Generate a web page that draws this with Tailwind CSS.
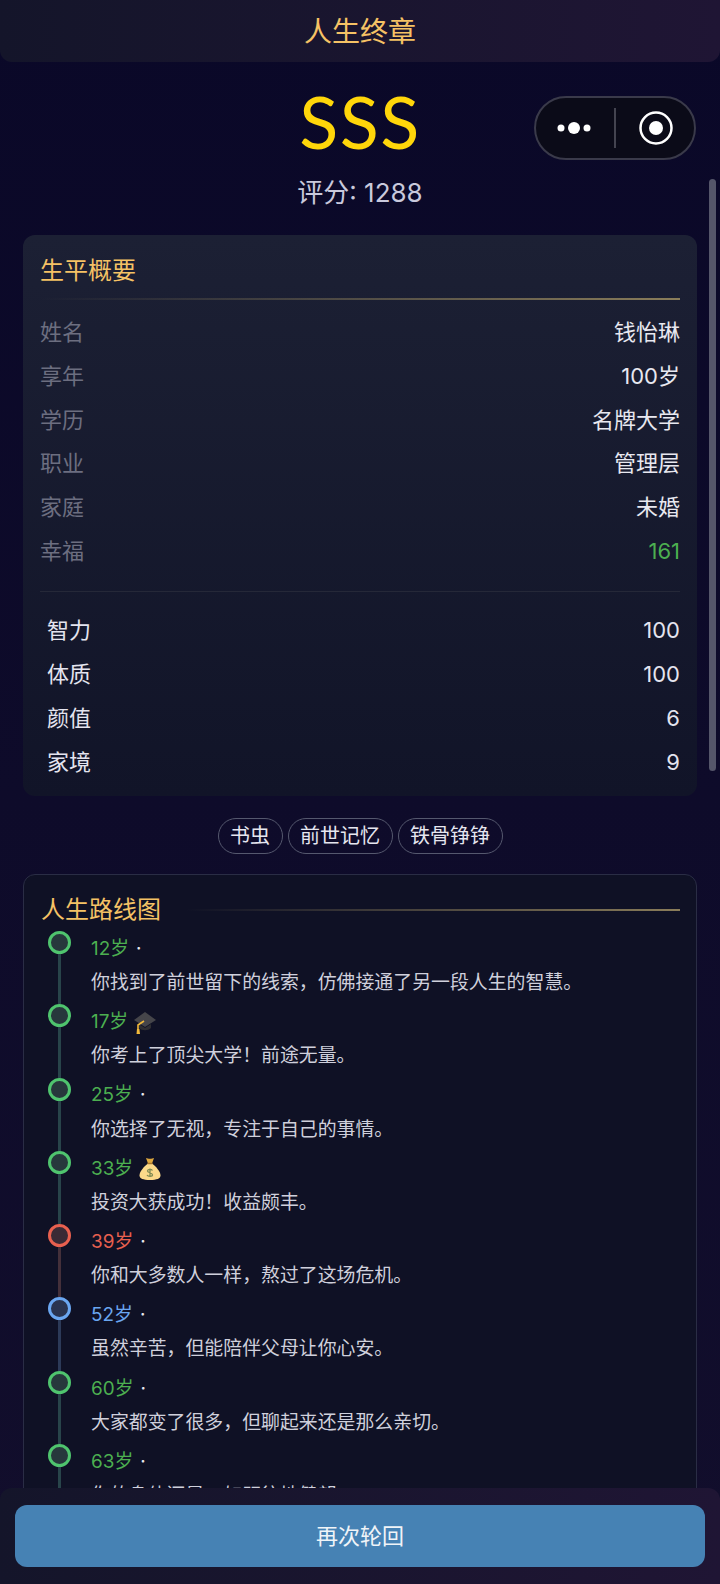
<!DOCTYPE html>
<html lang="zh">
<head>
<meta charset="utf-8">
<script src="https://cdn.jsdelivr.net/npm/@tailwindcss/browser@4"></script>
</head>
<body class="m-0">
<div class="relative w-[720px] h-[1584px] overflow-hidden bg-gradient-to-b from-[#0a0828] to-[#120e2c] font-['Inter','Noto_Sans_CJK_SC',sans-serif]">
  <header class="h-[62px] pt-[2px] rounded-b-[12px] bg-gradient-to-r from-[#14152a] to-[#1f1534] flex items-center justify-center text-[28px] leading-[60px] text-[#f5c265] font-normal">人生终章</header>

  <div class="flex flex-col items-center">
    <div class="mt-[23px] h-[72px] leading-[72px] text-[72px] tracking-[1.5px] text-[#ffd60a] font-['Lato',sans-serif]">SSS</div>
    <div class="mt-[18px] h-[36px] leading-[36px] text-[26px] text-[#c9c9dc]">评分: 1288</div>
  </div>

  <section class="mx-[23px] mt-[24px] h-[561px] rounded-[12px] bg-gradient-to-b from-[#1c2034] to-[#111428] px-[17px] pt-[18px]">
    <h2 class="text-[24px] leading-[34px] pt-[1px] h-[34px] text-[#f5c265] font-normal">生平概要</h2>
    <div class="mt-[11px] h-[2px] bg-gradient-to-r from-transparent to-[#8a7d5a]"></div>
    <div class="mt-[11px] flex flex-col text-[22px]">
      <div class="flex justify-between h-[43.7px] items-center"><span class="text-[#6c6e80]">姓名</span><span class="text-[#e8e8f0]">钱怡琳</span></div>
      <div class="flex justify-between h-[43.7px] items-center"><span class="text-[#6c6e80]">享年</span><span class="text-[#e8e8f0]">100岁</span></div>
      <div class="flex justify-between h-[43.7px] items-center"><span class="text-[#6c6e80]">学历</span><span class="text-[#e8e8f0]">名牌大学</span></div>
      <div class="flex justify-between h-[43.7px] items-center"><span class="text-[#6c6e80]">职业</span><span class="text-[#e8e8f0]">管理层</span></div>
      <div class="flex justify-between h-[43.7px] items-center"><span class="text-[#6c6e80]">家庭</span><span class="text-[#e8e8f0]">未婚</span></div>
      <div class="flex justify-between h-[43.7px] items-center"><span class="text-[#6c6e80]">幸福</span><span class="text-[#4caf50]">161</span></div>
    </div>
    <div class="mt-[18px] h-px bg-[#252838]"></div>
    <div class="mt-[17px] flex flex-col text-[22px] text-[#e4e4ef] pl-[7px]">
      <div class="flex justify-between h-[43.7px] items-center"><span>智力</span><span>100</span></div>
      <div class="flex justify-between h-[43.7px] items-center"><span>体质</span><span>100</span></div>
      <div class="flex justify-between h-[43.7px] items-center"><span>颜值</span><span>6</span></div>
      <div class="flex justify-between h-[43.7px] items-center"><span>家境</span><span>9</span></div>
    </div>
  </section>

  <div class="mt-[22px] flex justify-center gap-[5px]">
    <span class="h-[36px] px-[11.5px] rounded-full border border-[#55586e] text-[20px] leading-[34px] text-[#e6e6f0]">书虫</span>
    <span class="h-[36px] px-[11.5px] rounded-full border border-[#55586e] text-[20px] leading-[34px] text-[#e6e6f0]">前世记忆</span>
    <span class="h-[36px] px-[11.5px] rounded-full border border-[#55586e] text-[20px] leading-[34px] text-[#e6e6f0]">铁骨铮铮</span>
  </div>

  <section class="mx-[23px] mt-[20px] h-[700px] rounded-[12px] border border-[#2a2d45] bg-[#0f1125] pl-[17px] pr-[16px] pt-[18px]">
    <div class="flex items-center gap-[24px]">
      <h2 class="text-[24px] leading-[34px] text-[#f5c265] font-normal">人生路线图</h2>
      <div class="flex-1 h-[2px] bg-gradient-to-r from-transparent to-[#8a7d5a]"></div>
    </div>
    <ol class="mt-[4px] flex flex-col">
      <li class="flex h-[73.3px]">
        <div class="w-[36px] mr-[14px] shrink-0 flex flex-col items-center"><span class="w-[23px] h-[23px] shrink-0 rounded-full border-[3px] border-[#4fc46e] bg-[#27383c]"></span><span class="w-[3px] flex-1 bg-[#28444a]"></span></div>
        <div><div class="h-[32px] pt-[4px] flex items-center text-[18.9px] text-[#4caf50]">12岁<span class="ml-[7px] text-[#e8e8f0]">·</span></div><p class="mt-[5px] text-[18.9px] leading-[30px] text-[#cfd0dc]">你找到了前世留下的线索，仿佛接通了另一段人生的智慧。</p></div>
      </li>
      <li class="flex h-[73.3px]">
        <div class="w-[36px] mr-[14px] shrink-0 flex flex-col items-center"><span class="w-[23px] h-[23px] shrink-0 rounded-full border-[3px] border-[#4fc46e] bg-[#27383c]"></span><span class="w-[3px] flex-1 bg-[#28444a]"></span></div>
        <div><div class="h-[32px] pt-[4px] flex items-center text-[18.9px] text-[#4caf50]">17岁<svg class="ml-[5px]" width="24" height="24" viewBox="0 0 24 24"><path d="M12 2 23 10 12 17 1 10Z" fill="#45454a"/><path d="M6 14v4c3 3 9 3 12 0v-4l-6 4Z" fill="#2e2e33"/><path d="M11 11 5 15v4" fill="none" stroke="#f2b93b" stroke-width="1.6"/><path d="M4 19h2.400l.6 5H3.500Z" fill="#f2b93b"/></svg></div><p class="mt-[5px] text-[18.9px] leading-[30px] text-[#cfd0dc]">你考上了顶尖大学！前途无量。</p></div>
      </li>
      <li class="flex h-[73.3px]">
        <div class="w-[36px] mr-[14px] shrink-0 flex flex-col items-center"><span class="w-[23px] h-[23px] shrink-0 rounded-full border-[3px] border-[#4fc46e] bg-[#27383c]"></span><span class="w-[3px] flex-1 bg-[#28444a]"></span></div>
        <div><div class="h-[32px] pt-[4px] flex items-center text-[18.9px] text-[#4caf50]">25岁<span class="ml-[7px] text-[#e8e8f0]">·</span></div><p class="mt-[5px] text-[18.9px] leading-[30px] text-[#cfd0dc]">你选择了无视，专注于自己的事情。</p></div>
      </li>
      <li class="flex h-[73.3px]">
        <div class="w-[36px] mr-[14px] shrink-0 flex flex-col items-center"><span class="w-[23px] h-[23px] shrink-0 rounded-full border-[3px] border-[#4fc46e] bg-[#27383c]"></span><span class="w-[3px] flex-1 bg-[#28444a]"></span></div>
        <div><div class="h-[32px] pt-[4px] flex items-center text-[18.9px] text-[#4caf50]">33岁<svg class="ml-[5px]" width="24" height="24" viewBox="0 0 24 24"><path d="M8 1c2 1 6 1 8 0l-2 5.500h-4Z" fill="#e0a93f"/><path d="M10 6.500h4c4 3 8.500 8 8.500 12 0 3-3.500 4.500-10.500 4.500S1.500 21.500 1.500 18.500c0-4 4.500-9 8.500-12Z" fill="#fbd98a"/><path d="M9.500 6.500h5" stroke="#a9762a" stroke-width="1.500"/><path d="M14.500 13.500c-1-1.500-5-1.500-5 .5s5 1.500 5 3.700-4.500 2-5.500.3M12 11.500v8" fill="none" stroke="#7f8a52" stroke-width="1.300"/></svg></div><p class="mt-[5px] text-[18.9px] leading-[30px] text-[#cfd0dc]">投资大获成功！收益颇丰。</p></div>
      </li>
      <li class="flex h-[73.3px]">
        <div class="w-[36px] mr-[14px] shrink-0 flex flex-col items-center"><span class="w-[23px] h-[23px] shrink-0 rounded-full border-[3px] border-[#e8604f] bg-[#3a2a35]"></span><span class="w-[3px] flex-1 bg-[#44303a]"></span></div>
        <div><div class="h-[32px] pt-[4px] flex items-center text-[18.9px] text-[#e8604f]">39岁<span class="ml-[7px] text-[#e8e8f0]">·</span></div><p class="mt-[5px] text-[18.9px] leading-[30px] text-[#cfd0dc]">你和大多数人一样，熬过了这场危机。</p></div>
      </li>
      <li class="flex h-[73.3px]">
        <div class="w-[36px] mr-[14px] shrink-0 flex flex-col items-center"><span class="w-[23px] h-[23px] shrink-0 rounded-full border-[3px] border-[#6aa6f0] bg-[#2a3450]"></span><span class="w-[3px] flex-1 bg-[#2c3a58]"></span></div>
        <div><div class="h-[32px] pt-[4px] flex items-center text-[18.9px] text-[#6aa6f0]">52岁<span class="ml-[7px] text-[#e8e8f0]">·</span></div><p class="mt-[5px] text-[18.9px] leading-[30px] text-[#cfd0dc]">虽然辛苦，但能陪伴父母让你心安。</p></div>
      </li>
      <li class="flex h-[73.3px]">
        <div class="w-[36px] mr-[14px] shrink-0 flex flex-col items-center"><span class="w-[23px] h-[23px] shrink-0 rounded-full border-[3px] border-[#4fc46e] bg-[#27383c]"></span><span class="w-[3px] flex-1 bg-[#28444a]"></span></div>
        <div><div class="h-[32px] pt-[4px] flex items-center text-[18.9px] text-[#4caf50]">60岁<span class="ml-[7px] text-[#e8e8f0]">·</span></div><p class="mt-[5px] text-[18.9px] leading-[30px] text-[#cfd0dc]">大家都变了很多，但聊起来还是那么亲切。</p></div>
      </li>
      <li class="flex h-[73.3px]">
        <div class="w-[36px] mr-[14px] shrink-0 flex flex-col items-center"><span class="w-[23px] h-[23px] shrink-0 rounded-full border-[3px] border-[#4fc46e] bg-[#27383c]"></span><span class="w-[3px] flex-1 bg-[#28444a]"></span></div>
        <div><div class="h-[32px] pt-[4px] flex items-center text-[18.9px] text-[#4caf50]">63岁<span class="ml-[7px] text-[#e8e8f0]">·</span></div><p class="mt-[5px] text-[18.9px] leading-[30px] text-[#cfd0dc]">你的身体还是一如既往地健朗。</p></div>
      </li>
    </ol>
  </section>

  <!-- overlays -->
  <div class="absolute left-[709px] top-[179px] w-[7px] h-[592px] rounded-full bg-[#55566a]"></div>

  <div class="absolute left-[534px] top-[96px] w-[162px] h-[64px] rounded-full border-2 border-[#3a3a4a] bg-[#0b0b18]">
    <svg class="absolute left-[-1px] top-[-2px]" width="160" height="64" viewBox="0 0 160 64"><circle cx="26" cy="32" r="3.500" fill="#fff"/><circle cx="39" cy="32" r="6" fill="#fff"/><circle cx="52" cy="32" r="3.500" fill="#fff"/><rect x="79" y="12" width="2" height="40" fill="#444450"/><circle cx="121" cy="32" r="15.500" fill="none" stroke="#fff" stroke-width="2.500"/><circle cx="121" cy="32" r="7" fill="#fff"/></svg>
  </div>

  <div class="absolute left-0 right-0 bottom-0 h-[96px] rounded-t-[12px] bg-gradient-to-r from-[#14152a] to-[#1f1534] px-[15px] pt-[17px]">
    <button class="w-full h-[62px] rounded-[12px] bg-[#4682b4] text-[22px] text-[#f0f4f8]">再次轮回</button>
  </div>
</div>
</body>
</html>
